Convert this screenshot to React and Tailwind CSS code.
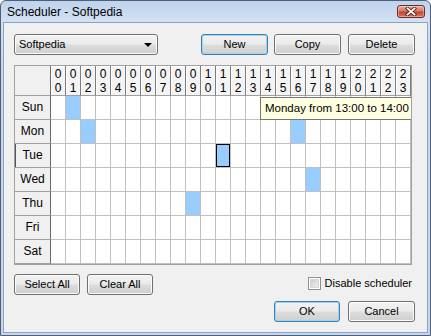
import React from 'react'

// Scheduler dialog — Win7 "basic" look, one grid of 7 days x 24 hours.

const days = ['Sun', 'Mon', 'Tue', 'Wed', 'Thu', 'Fri', 'Sat']
const hours = Array.from({ length: 24 }, (_, h) => String(h).padStart(2, '0'))

// Hours that are switched on, per day
const marked = { Sun: [1], Mon: [2, 16], Tue: [11], Wed: [17], Thu: [9] }
const selected = { day: 'Tue', hour: 11 }

function Button({ children, primary, className = '' }) {
  return (
    <button
      className={`flex h-[21px] items-center justify-center rounded-[3px] border text-[11px] text-black bg-[linear-gradient(to_bottom,#f2f2f2_0%,#ebebeb_48%,#dddddd_52%,#cfcfcf_100%)] ${
        primary
          ? 'border-[#3c7fb1] shadow-[inset_0_0_0_1px_#9fd5f4]'
          : 'border-[#707070] shadow-[inset_0_0_0_1px_#fbfbfb]'
      } ${className}`}
    >
      {children}
    </button>
  )
}

export default function App() {
  return (
    <div className="font-['Liberation_Sans',Arial,sans-serif] text-black">
      {/* ── WINDOW FRAME ───────────────────────────── */}
      <div className="flex h-[336px] w-[431px] flex-col rounded-t-[6px] border border-[#4f6076] bg-[linear-gradient(to_bottom,#bfd3ed_0px,#d3e1f3_21px,#c6d8ee_60px,#c3d6ee_100%)] px-[2px] pb-[2px]">

        {/* Title bar */}
        <div className="-mx-[2px] flex h-[21px] items-center pl-[6px] pr-[5px]">
          <span className="text-[12px]">Scheduler - Softpedia</span>
          <div className="ml-auto flex h-[13px] w-[28px] items-center justify-center rounded-[3px] border border-[#6b2c24] bg-[linear-gradient(to_bottom,#eab0a3_0%,#d57a66_45%,#c2452f_55%,#d67a62_100%)] shadow-[inset_0_0_0_1px_rgba(255,255,255,0.35)]">
            <svg width="12" height="9" viewBox="0 0 12 9">
              <path d="M2.5 1.5 L9.5 7.5 M9.5 1.5 L2.5 7.5" stroke="#5a1e16" strokeWidth="3.6" strokeLinecap="square" />
              <path d="M2.5 1.5 L9.5 7.5 M9.5 1.5 L2.5 7.5" stroke="#fff" strokeWidth="1.8" strokeLinecap="square" />
            </svg>
          </div>
        </div>

        {/* ── CLIENT AREA ─────────────────────────── */}
        <div className="flex flex-1 flex-col border border-[#8ea3bd] bg-[#f0f0f0] pl-[10px] pt-[11px]">

          {/* Top row — profile select and actions */}
          <div className="flex items-center pr-[12px]">
            <div className="flex h-[21px] w-[144px] items-center rounded-[3px] border border-[#707070] bg-[linear-gradient(to_bottom,#f2f2f2_0%,#ebebeb_48%,#dddddd_52%,#cfcfcf_100%)] pl-[4px] pr-[5px] text-[11px] shadow-[inset_0_0_0_1px_#fbfbfb]">
              <span>Softpedia</span>
              <svg className="ml-auto" width="8" height="4" viewBox="0 0 8 4">
                <polygon points="0,0 8,0 4,4" fill="#000" />
              </svg>
            </div>
            <Button primary className="ml-auto w-[67px]">New</Button>
            <Button className="ml-[6px] w-[67px]">Copy</Button>
            <Button className="ml-[7px] w-[67px]">Delete</Button>
          </div>

          {/* Schedule grid */}
          <div className="relative mt-[10px] w-[398px] overflow-hidden border border-[#a0a0a0] bg-white">
            <div className="grid grid-cols-[36px_repeat(24,15px)] grid-rows-[30px_repeat(7,24px)]">
              <div className="border-b border-r border-b-[#a0a0a0] border-r-[#6b6b6b] bg-[#f0f0f0]" />
              {hours.map(h => (
                <div
                  key={h}
                  className="flex flex-col items-center border-b border-r border-b-[#a0a0a0] border-r-[#7c7c7c] bg-[#f4f4f4] pt-px text-[12px] leading-[14px] shadow-[inset_1px_1px_0_#fff]"
                >
                  <span>{h[0]}</span>
                  <span>{h[1]}</span>
                </div>
              ))}

              {days.map(day => (
                <React.Fragment key={day}>
                  <div
                    className={`flex items-center justify-center border-b border-r border-b-[#a0a0a0] border-r-[#6b6b6b] bg-[#f0f0f0] pb-[2px] text-[12px] ${
                      day === selected.day ? 'shadow-[inset_1px_0_0_#555]' : ''
                    }`}
                  >
                    {day}
                  </div>
                  {hours.map((h, i) => {
                    const on = (marked[day] || []).includes(i)
                    const sel = day === selected.day && i === selected.hour
                    return (
                      <div
                        key={h}
                        className={`border-b border-r border-[#c0c0c0] ${on ? 'bg-[#99ccff]' : 'bg-white'} ${
                          sel ? 'shadow-[inset_0_0_0_1px_#000]' : ''
                        }`}
                      />
                    )
                  })}
                </React.Fragment>
              ))}
            </div>

            {/* Hover tooltip — clipped by the grid edge */}
            <div className="absolute left-[245px] top-[31px] h-[23px] whitespace-nowrap border border-[#767676] bg-[#ffffe1] pl-[4px] pr-[3px] text-[11.5px] leading-[21px]">
              Monday from 13:00 to 14:00
            </div>
          </div>

          {/* Select / clear + disable */}
          <div className="mt-[9px] flex items-start pr-[15px]">
            <Button className="w-[66px]">Select All</Button>
            <Button className="ml-[7px] w-[66px]">Clear All</Button>
            <div className="ml-auto mt-px flex items-center gap-[4px]">
              <div className="flex h-[13px] w-[13px] items-center justify-center border border-[#8e8f8f] bg-white">
                <div className="h-[9px] w-[9px] bg-[linear-gradient(135deg,#cbcbcb,#f3f3f3)] shadow-[inset_0_0_0_1px_#d8d8d8]" />
              </div>
              <span className="text-[11px]">Disable scheduler</span>
            </div>
          </div>

          {/* Dialog buttons */}
          <div className="mt-[6px] flex pr-[12px]">
            <Button primary className="ml-auto w-[66px]">OK</Button>
            <Button className="ml-[8px] w-[67px]">Cancel</Button>
          </div>
        </div>
      </div>
    </div>
  )
}
